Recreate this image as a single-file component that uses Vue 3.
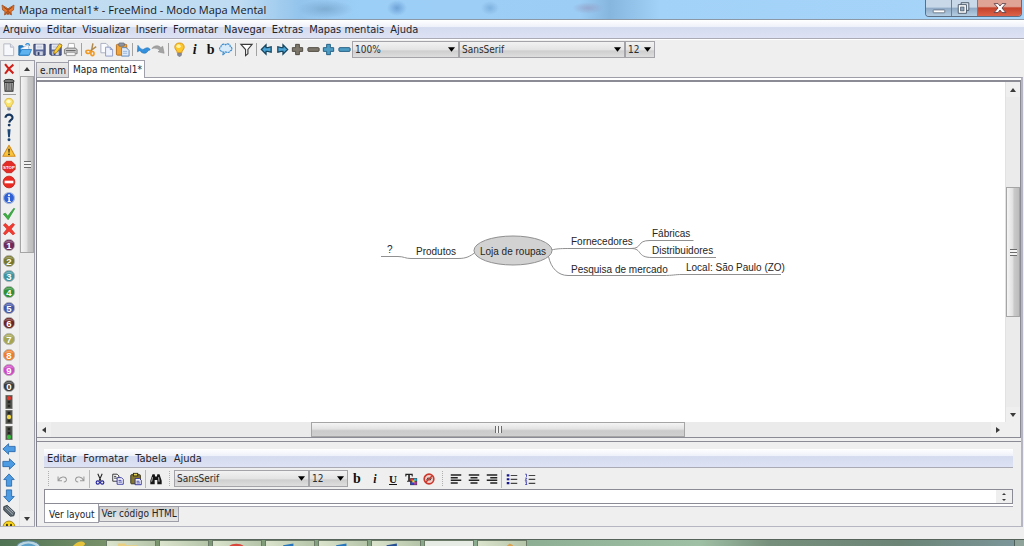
<script setup>
import { ref } from 'vue'

const menus = ['Arquivo', 'Editar', 'Visualizar', 'Inserir', 'Formatar', 'Navegar', 'Extras', 'Mapas mentais', 'Ajuda']
const noteMenus = ['Editar', 'Formatar', 'Tabela', 'Ajuda']

const tools = [
  { id: 'new', label: 'Novo' },
  { id: 'open', label: 'Abrir' },
  { id: 'save', label: 'Salvar' },
  { id: 'saveas', label: 'Salvar como' },
  { id: 'print', label: 'Imprimir' },
  { id: 'sep' },
  { id: 'cut', label: 'Recortar' },
  { id: 'copy', label: 'Copiar' },
  { id: 'paste', label: 'Colar' },
  { id: 'sep' },
  { id: 'undo', label: 'Desfazer' },
  { id: 'redo', label: 'Refazer' },
  { id: 'sep' },
  { id: 'bulb', label: 'Novo nó' },
  { id: 'italic', label: 'Itálico' },
  { id: 'bold', label: 'Negrito' },
  { id: 'cloud', label: 'Nuvem' },
  { id: 'sep' },
  { id: 'filter', label: 'Filtro' },
  { id: 'sep' },
  { id: 'back', label: 'Anterior' },
  { id: 'forward', label: 'Próximo' },
  { id: 'plus', label: 'Expandir', color: '#7d766b', edge: '#4c473f' },
  { id: 'minus', label: 'Recolher', color: '#7d766b', edge: '#4c473f' },
  { id: 'plus', label: 'Expandir tudo', color: '#4d9cc4', edge: '#205d82' },
  { id: 'minus', label: 'Recolher tudo', color: '#4d9cc4', edge: '#205d82' },
]

const marks = [
  { id: 'bulb', label: 'Ideia' },
  { id: 'help', label: 'Pergunta' },
  { id: 'bang', label: 'Importante' },
  { id: 'warn', label: 'Aviso' },
  { id: 'stop', label: 'Pare' },
  { id: 'noentry', label: 'Proibido' },
  { id: 'info', label: 'Informação' },
  { id: 'check', label: 'Certo' },
  { id: 'cross', label: 'Errado' },
  { id: 'num', n: '1', color: '#6d2a5c', label: 'Prioridade 1' },
  { id: 'num', n: '2', color: '#78782c', label: 'Prioridade 2' },
  { id: 'num', n: '3', color: '#3e93a0', label: 'Prioridade 3' },
  { id: 'num', n: '4', color: '#2f8f35', label: 'Prioridade 4' },
  { id: 'num', n: '5', color: '#4456a8', label: 'Prioridade 5' },
  { id: 'num', n: '6', color: '#6e2323', label: 'Prioridade 6' },
  { id: 'num', n: '7', color: '#a5a552', label: 'Prioridade 7' },
  { id: 'num', n: '8', color: '#ee7d2b', label: 'Prioridade 8' },
  { id: 'num', n: '9', color: '#cf48c6', label: 'Prioridade 9' },
  { id: 'num', n: '0', color: '#3b3b3b', label: 'Prioridade 0' },
  { id: 'light', lit: 0, label: 'Sinal vermelho' },
  { id: 'light', lit: 1, label: 'Sinal amarelo' },
  { id: 'light', lit: 2, label: 'Sinal verde' },
  { id: 'arrow', turn: 0, label: 'Esquerda' },
  { id: 'arrow', turn: 180, label: 'Direita' },
  { id: 'arrow', turn: 90, label: 'Acima' },
  { id: 'arrow', turn: 270, label: 'Abaixo' },
  { id: 'clip', label: 'Anexo' },
  { id: 'smile', label: 'Feliz' },
]
const lamps = ['#e03a2e', '#f0d84a', '#35b83a']

const zoom = ref('100%')
const font = ref('SansSerif')
const size = ref('12')
const noteFont = ref('SansSerif')
const noteSize = ref('12')
const note = ref('')
</script>

<template>
  <div class="window">
    <header class="titlebar">
      <svg class="logo" viewBox="0 0 14 14" aria-hidden="true">
        <path d="M1 2 L6 5 L7 7 L8 5 L13 2 L12.5 7 L10 8.5 L10.5 12 L7.5 10.5 L7 12 L6.3 10.5 L3.5 12 L4 8.5 L1.6 7Z" fill="#e8762c" stroke="#9a4a1c" stroke-width=".7" />
        <path d="M2.5 4 L6 6.5 M11.5 4 L8 6.5 M7 5 V11 M4.5 10.5 L6 8.5 M9.5 10.5 L8 8.5" stroke="#74300f" stroke-width=".7" fill="none" />
      </svg>
      <h1>Mapa mental1* - FreeMind - Modo Mapa Mental</h1>
      <div class="controls">
        <button class="ctl" aria-label="Minimizar">
          <svg viewBox="0 0 26 16"><rect x="7.5" y="10" width="12" height="3" rx=".5" fill="#fff" stroke="#586577" stroke-width=".8" /></svg>
        </button>
        <button class="ctl" aria-label="Restaurar">
          <svg viewBox="0 0 26 16">
            <path d="M9.5 2.5H17.500V10.500H9.500Z" fill="#dfe8f2" stroke="#4c5969" />
            <path d="M6.500 4.500H15V13.500H6.500Z" fill="#fff" stroke="#4c5969" />
            <rect x="9" y="7" width="3.500" height="4" fill="#90a7c0" stroke="#4c5969" stroke-width=".8" />
          </svg>
        </button>
        <button class="ctl close" aria-label="Fechar">
          <svg viewBox="0 0 44 16"><path d="M16.500 3.500h4l2 2.500 2-2.500h4l-4 4.500 4 4.700h-4l-2-2.600-2 2.600h-4l4-4.700z" fill="#fff" stroke="#5a3c44" stroke-width=".9" /></svg>
        </button>
      </div>
    </header>

    <nav class="menubar" aria-label="Menu principal">
      <button v-for="m in menus" :key="m">{{ m }}</button>
    </nav>

    <div class="toolbar">
      <div class="strip">
        <template v-for="(t, i) in tools" :key="i">
          <span v-if="t.id === 'sep'" class="sep"></span>
          <button v-else class="tool" :aria-label="t.label">
            <svg viewBox="0 0 16 16">
              <g v-if="t.id === 'new'">
                <path d="M3 2H10L13.500 5.500V14.500H3Z" fill="#f7f8fb" stroke="#b4b8c4" />
                <path d="M10 2V5.500H13.500" fill="#dfe3ec" stroke="#b4b8c4" />
              </g>
              <g v-else-if="t.id === 'open'">
                <path d="M2 14V4H6L7 5.500H12V14Z" fill="#1f7fcb" stroke="#1766a8" />
                <path d="M4 7L12 3L13 9H5Z" fill="#f3f7fb" stroke="#9db4c8" stroke-width=".6" />
                <path d="M2 14L5 8H15.500L13 14Z" fill="#5fb4f0" stroke="#1c74bd" stroke-width=".8" />
                <path d="M9 3C11 1 13 1.500 13.500 4" fill="none" stroke="#2d8ede" stroke-width="1.300" />
              </g>
              <g v-else-if="t.id === 'save' || t.id === 'saveas'">
                <path d="M2 2.500H14V14H3L2 13Z" fill="#5c6b9b" stroke="#2f3b66" />
                <rect x="4" y="2.500" width="8" height="5.500" fill="#eef1f8" />
                <path d="M5 4.500H11M5 6.200H11" stroke="#a9b3cd" stroke-width=".7" />
                <rect x="4.500" y="10" width="7" height="4" fill="#cfd5e4" />
                <rect x="6" y="10.800" width="2" height="3" fill="#2f3b66" />
                <path v-if="t.id === 'saveas'" d="M12.500 1.500L15 4L9 11.500L6 12.500L6.800 9.500Z" fill="#fbcf2c" stroke="#a5761a" stroke-width=".8" />
              </g>
              <g v-else-if="t.id === 'print'">
                <path d="M5 7L6 1.500H12L12.500 7Z" fill="#fff" stroke="#999" stroke-width=".8" />
                <path d="M1.500 8L4 6.500H13L15 8V12.500H1.500Z" fill="#cfcfcf" stroke="#777" />
                <path d="M3.500 11H13V14.500H3.500Z" fill="#f2f2f2" stroke="#888" stroke-width=".8" />
                <path d="M3 9.200H13.500" stroke="#555" />
              </g>
              <g v-else-if="t.id === 'cut'">
                <path d="M9.500 1.500L8 9.500M13 5L6 10" stroke="#b08a50" stroke-width="1.600" />
                <ellipse cx="4.500" cy="10.500" rx="2.500" ry="1.700" fill="none" stroke="#ef9a24" stroke-width="1.700" />
                <ellipse cx="9" cy="12.300" rx="1.700" ry="2.200" fill="none" stroke="#ef9a24" stroke-width="1.700" />
              </g>
              <g v-else-if="t.id === 'copy'">
                <path d="M2 1.500H7.500L9.500 3.500V11.500H2Z" fill="#fafbfd" stroke="#a9aec0" />
                <path d="M7 5.500H12L14.500 8V15H7Z" fill="#eef2fb" stroke="#8f9cc4" />
                <path d="M12 5.500V8H14.500" fill="none" stroke="#8f9cc4" />
              </g>
              <g v-else-if="t.id === 'paste'">
                <rect x="1.500" y="2.500" width="11" height="11.500" rx="1" fill="#f0a43c" stroke="#b26d1c" />
                <rect x="4" y="1" width="6" height="3.500" rx="1" fill="#8d94a3" stroke="#5c6270" stroke-width=".7" />
                <path d="M7 6H12L15 9V15H7Z" fill="#dfeaf8" stroke="#5b86bb" />
                <path d="M8.500 10H13M8.500 12H13" stroke="#86a8d2" stroke-width=".8" />
              </g>
              <path v-else-if="t.id === 'undo'" d="M2 3.500L4 6C5.500 8 8 8.500 9.500 7C12 5.200 15 6.500 15 8.500C12.500 8.200 12.500 12 9 12C6.500 12 5 10.500 4.200 9L1.500 10.500Z" fill="#3290dc" stroke="#1d6fb7" stroke-width=".6" />
              <path v-else-if="t.id === 'redo'" d="M1 7C3 3.500 8 3 10.500 6L12.500 4.500L14 12L7.500 10.500L9.500 9C7 6.500 4 6 1 7Z" fill="#a3a3a3" stroke="#8a8a8a" stroke-width=".6" />
              <g v-else-if="t.id === 'bulb'">
                <path d="M8 1C4.500 1 2.800 3.300 3 5.800C3.200 8 5.500 9 5.500 11.500H10.500C10.500 9 12.800 8 13 5.800C13.200 3.300 11.500 1 8 1Z" fill="#fdc629" stroke="#d88f12" stroke-width=".9" />
                <ellipse cx="7" cy="4.500" rx="2.300" ry="2" fill="#fff3a8" />
                <path d="M6 12H10V14L8.800 15.300H7.200L6 14Z" fill="#8a8d99" stroke="#5e616c" stroke-width=".6" />
              </g>
              <text v-else-if="t.id === 'italic'" x="6" y="13" class="glyph it">i</text>
              <text v-else-if="t.id === 'bold'" x="4" y="13" class="glyph bd">b</text>
              <g v-else-if="t.id === 'cloud'">
                <path d="M4 10C1 9 1 6 3.200 5C3 2.500 6.500 1.500 8 3C10 1 13.500 2.500 13 4.800C15.500 5.500 15.500 9 13 9.500C12 11.500 10 11.500 8.500 10.500L5 14L6 10.800C5 11 4.500 10.500 4 10Z" fill="#d7ebfa" stroke="#3d8ccb" stroke-width="1.200" stroke-dasharray="2.500 .5" />
              </g>
              <path v-else-if="t.id === 'filter'" d="M2 2.500H14L9.500 8V12.500L7 14.500V8Z" fill="#fff" stroke="#3b3b3b" stroke-width="1.200" />
              <path v-else-if="t.id === 'back' || t.id === 'forward'" :class="{ flip: t.id === 'forward' }" d="M2.500 8L7.500 3V6H9.500L13 5V11L9.500 10H7.500V13Z" fill="#4aa4d6" stroke="#15455f" stroke-width="1.300" />
              <path v-else-if="t.id === 'plus'" d="M6 2.500H10V6H13.500V10H10V13.500H6V10H2.500V6H6Z" :fill="t.color" :stroke="t.edge" />
              <rect v-else x="2" y="6" width="12" height="4" rx="1" :fill="t.color" :stroke="t.edge" />
            </svg>
          </button>
        </template>
      </div>
      <label class="combo zoom">
        <select v-model="zoom" aria-label="Zoom"><option>100%</option></select>
        <svg viewBox="0 0 8 5"><path d="M0 0H8L4 5Z" /></svg>
      </label>
      <label class="combo font">
        <select v-model="font" aria-label="Fonte"><option>SansSerif</option></select>
        <svg viewBox="0 0 8 5"><path d="M0 0H8L4 5Z" /></svg>
      </label>
      <label class="combo size">
        <select v-model="size" aria-label="Tamanho"><option>12</option></select>
        <svg viewBox="0 0 8 5"><path d="M0 0H8L4 5Z" /></svg>
      </label>
    </div>

    <div class="body">
      <aside class="side">
        <div class="palette">
          <button class="mark" aria-label="Remover último ícone">
            <svg viewBox="0 0 16 16"><path d="M3.500 2.500C6 6 9.500 10 13 13M13 3C9 6 6 9.500 3.500 13.500" stroke="#d01f18" stroke-width="2.300" fill="none" /></svg>
          </button>
          <button class="mark" aria-label="Remover todos os ícones">
            <svg viewBox="0 0 16 16">
              <path d="M3 5H13L12.500 15H3.500Z" fill="#bdbdbd" stroke="#333" stroke-width="1.200" />
              <path d="M5.500 6V14M8 6V14M10.500 6V14" stroke="#4a4a4a" stroke-width="1.200" />
              <ellipse cx="8" cy="3.500" rx="6" ry="2" fill="#777" stroke="#2b2b2b" />
            </svg>
          </button>
          <hr />
          <div class="marks">
            <button v-for="(m, i) in marks" :key="i" class="mark" :aria-label="m.label">
              <svg viewBox="0 0 16 16">
                <g v-if="m.id === 'bulb'">
                  <path d="M8 1.500C4.500 1.500 3 4 3.200 6C3.500 8.500 5.700 9 5.700 11.500H10.300C10.300 9 12.500 8.500 12.800 6C13 4 11.500 1.500 8 1.500Z" fill="#fbe46c" stroke="#d9b542" />
                  <ellipse cx="7.500" cy="5" rx="2.500" ry="2" fill="#fffad0" />
                  <path d="M6 12H10V14L9 15.500H7L6 14Z" fill="#8e909b" />
                </g>
                <g v-else-if="m.id === 'help'" fill="none" stroke="#17365f">
                  <path d="M4 5.500C4 0.500 12.500 1 12 5.500C11.700 8 8.500 8 8.300 11" stroke-width="2.500" />
                  <circle cx="8.200" cy="13.800" r=".9" stroke-width="1.500" />
                </g>
                <g v-else-if="m.id === 'bang'" fill="#1c4677">
                  <path d="M6.200 1.500H9.800L9 10.500H7Z" /><circle cx="8" cy="13.300" r="1.700" />
                </g>
                <g v-else-if="m.id === 'warn'">
                  <path d="M8 1.500L15 14H1Z" fill="#f9c43b" stroke="#d58c1d" stroke-width="1.200" stroke-linejoin="round" />
                  <path d="M7.200 5.500H8.800L8.500 10H7.500Z" fill="#222" /><circle cx="8" cy="11.800" r="1" fill="#222" />
                </g>
                <g v-else-if="m.id === 'stop'">
                  <path d="M5 1.500H11L15 5.500V10.500L11 14.500H5L1 10.500V5.500Z" fill="#e52b25" stroke="#c22520" />
                  <text x="8" y="10" class="tiny">STOP</text>
                </g>
                <g v-else-if="m.id === 'noentry'">
                  <circle cx="8" cy="8" r="6.700" fill="#ea2a22" stroke="#c5231c" /><rect x="3" y="6.500" width="10" height="3" fill="#fff" />
                </g>
                <g v-else-if="m.id === 'info'">
                  <circle cx="8" cy="8" r="6.300" fill="#2f60d6" stroke="#a9b9d9" stroke-width="1.400" />
                  <circle cx="8" cy="4.800" r="1.200" fill="#fff" /><path d="M6.500 7H9V11.500H10V12.500H6.500V11.500H7.300V8H6.500Z" fill="#fff" />
                </g>
                <path v-else-if="m.id === 'check'" d="M1.500 8L4 7L6.500 10.500L13.500 1.500L14.500 2L7 14.500Z" fill="#3eb043" stroke="#2b9033" stroke-width=".8" />
                <path v-else-if="m.id === 'cross'" d="M1.500 3.500L4 1.500L8 5.500L12.500 1.500L14.500 3L10.500 8L14.800 13L12.500 14.800L8 10.500L3.500 14.800L1.500 13L5.500 8Z" fill="#f13a30" stroke="#cc231b" stroke-width=".6" />
                <g v-else-if="m.id === 'num'">
                  <circle cx="8" cy="8" r="6.500" :fill="m.color" stroke="#b7b7b7" stroke-width="1" />
                  <path d="M3 6A5.500 5.500 0 0 1 13 6C10 4.500 6 4.500 3 6Z" fill="#fff" opacity=".3" />
                  <text x="8" y="12" class="digit">{{ m.n }}</text>
                </g>
                <g v-else-if="m.id === 'light'">
                  <rect x="4.500" y=".500" width="7" height="15" fill="#4a4a46" stroke="#6d6d68" />
                  <circle v-for="k in 3" :key="k" cx="8" :cy="k * 4.500 - 1" :r="m.lit === k - 1 ? 2.500 : 1.500" :fill="m.lit === k - 1 ? lamps[k - 1] : '#252522'" />
                </g>
                <path v-else-if="m.id === 'arrow'" :transform="`rotate(${m.turn} 8 8)`" d="M1 8L7.500 2V5H15V11H7.500V14Z" fill="#4d9be2" stroke="#2b69ad" stroke-width="1" />
                <g v-else-if="m.id === 'clip'">
                  <path d="M2 3L6 1.500L14.500 9.500L13.500 13.500L9.500 14L2 7Z" fill="#5a6670" stroke="#323b43" />
                  <path d="M4 4L12.500 12M6.500 3.500L13 9.500" stroke="#bfc7cd" stroke-width=".9" />
                </g>
                <g v-else>
                  <circle cx="8" cy="8" r="6.800" fill="#f9d51d" stroke="#9b7e12" />
                  <ellipse cx="5.700" cy="6" rx="1" ry="1.600" fill="#222" /><ellipse cx="10.300" cy="6" rx="1" ry="1.600" fill="#222" />
                  <path d="M4 9.500Q8 14 12 9.500" fill="none" stroke="#222" />
                </g>
              </svg>
            </button>
          </div>
        </div>
        <div class="vscroll">
          <button aria-label="Rolar para cima"><svg viewBox="0 0 6 4"><path d="M0 4H6L3 0Z" /></svg></button>
          <div class="track"><span class="lead"></span><span class="thumb"><i></i></span><span class="rest"></span></div>
          <button aria-label="Rolar para baixo"><svg viewBox="0 0 6 4"><path d="M0 0H6L3 4Z" /></svg></button>
        </div>
      </aside>

      <main class="main">
        <div class="tabs">
          <button class="tab">e.mm</button>
          <button class="tab active">Mapa mental1*</button>
        </div>
        <div class="page">
          <section class="view">
            <div class="canvas">
              <svg class="map" viewBox="0 0 430 70" role="img" aria-label="Loja de roupas">
                <g fill="none" stroke="#909090">
                  <path d="M11 37.500H28C34 37.500 35 39.500 41 39.500H88C97 39.500 100 37 104.500 34" />
                  <path d="M181 31C188 29.500 192 29.500 201 29.500H261C273 29.500 266 21.500 280 21.500H323.500" />
                  <path d="M261 29.500C273 29.500 266 38.500 282 38.500H346" />
                  <path d="M178.500 37.500C181 49 188 56.500 198 56.500H293C304 56.500 304 55.500 312 55.500H411" />
                </g>
                <ellipse cx="143" cy="31.500" rx="39" ry="14.500" fill="#d2d2d2" stroke="#909090" />
                <g class="node">
                  <text x="17" y="34">?</text>
                  <text x="46" y="36">Produtos</text>
                  <text x="143" y="36" text-anchor="middle">Loja de roupas</text>
                  <text x="201" y="26">Fornecedores</text>
                  <text x="282" y="18">Fábricas</text>
                  <text x="282" y="35">Distribuidores</text>
                  <text x="201" y="54">Pesquisa de mercado</text>
                  <text x="316" y="52">Local: São Paulo (ZO)</text>
                </g>
              </svg>
            </div>
            <div class="vscroll">
              <button aria-label="Rolar mapa para cima"><svg viewBox="0 0 6 4"><path d="M0 4H6L3 0Z" /></svg></button>
              <div class="track"><span class="lead"></span><span class="thumb"><i></i></span><span class="rest"></span></div>
              <button aria-label="Rolar mapa para baixo"><svg viewBox="0 0 6 4"><path d="M0 0H6L3 4Z" /></svg></button>
            </div>
            <div class="hscroll">
              <button aria-label="Rolar mapa para a esquerda"><svg viewBox="0 0 4 6"><path d="M4 0V6L0 3Z" /></svg></button>
              <div class="track"><span class="lead"></span><span class="thumb"><i></i></span><span class="rest"></span></div>
              <button aria-label="Rolar mapa para a direita"><svg viewBox="0 0 4 6"><path d="M0 0V6L4 3Z" /></svg></button>
            </div>
            <div class="corner"></div>
          </section>

          <section class="notes">
            <nav class="menubar" aria-label="Menu da nota">
              <button v-for="m in noteMenus" :key="m">{{ m }}</button>
            </nav>
            <div class="notebar">
              <span class="grip"></span>
              <button class="nb" aria-label="Desfazer"><svg viewBox="0 0 16 16"><path d="M3.500 5V10H8M4 9.500C6 5 12 4.500 13 8C13.500 10 12 11.500 10 11.500" fill="none" stroke="#9a9a9a" stroke-width="1.200" /></svg></button>
              <button class="nb" aria-label="Refazer"><svg viewBox="0 0 16 16"><path d="M12.500 5V10H8M12 9.500C10 5 4 4.500 3 8C2.500 10 4 11.500 6 11.500" fill="none" stroke="#9a9a9a" stroke-width="1.200" /></svg></button>
              <span class="bar"></span>
              <button class="nb" aria-label="Recortar"><svg viewBox="0 0 16 16"><path d="M5.500 2L9 10M10.500 2L7 10" stroke="#222" stroke-width="1.200" /><circle cx="5.500" cy="12" r="1.900" fill="none" stroke="#24249a" stroke-width="1.300" /><circle cx="10.500" cy="12" r="1.900" fill="none" stroke="#24249a" stroke-width="1.300" /></svg></button>
              <button class="nb" aria-label="Copiar"><svg viewBox="0 0 16 16"><path d="M2 2.500H7L9 4.500V10.500H2Z" fill="#fff" stroke="#222" /><path d="M3.500 5H6M3.500 7H7" stroke="#222" /><path d="M7 6.500H12L14 8.500V14H7Z" fill="#fff" stroke="#24249a" /><path d="M8.500 9.500H12M8.500 11.500H12.500" stroke="#24249a" /></svg></button>
              <button class="nb" aria-label="Colar"><svg viewBox="0 0 16 16"><rect x="2" y="3" width="11" height="10.500" rx="1" fill="#84762e" stroke="#2d2912" /><rect x="5" y="1.500" width="5" height="3" fill="#e6d557" stroke="#2d2912" /><path d="M7 7.500H12L14 9.500V14.500H7Z" fill="#fff" stroke="#24249a" /><path d="M8.500 10.500H12M8.500 12.500H12.500" stroke="#24249a" /></svg></button>
              <span class="bar"></span>
              <button class="nb" aria-label="Localizar"><svg viewBox="0 0 16 16"><path d="M4 2.500H6.500L7 5H9L9.500 2.500H12L14.500 10V14H9.500V9H6.500V14H1.500V10Z" fill="#161616" /><path d="M4 6L3 11M11 6L11.500 11" stroke="#ddd" /></svg></button>
              <span class="grip"></span>
              <label class="combo nfont">
                <select v-model="noteFont" aria-label="Fonte da nota"><option>SansSerif</option></select>
                <svg viewBox="0 0 8 5"><path d="M0 0H8L4 5Z" /></svg>
              </label>
              <label class="combo nsize">
                <select v-model="noteSize" aria-label="Tamanho da nota"><option>12</option></select>
                <svg viewBox="0 0 8 5"><path d="M0 0H8L4 5Z" /></svg>
              </label>
              <button class="nb letter"><b>b</b></button>
              <button class="nb letter slim"><b><i>i</i></b></button>
              <button class="nb letter under"><b><u>U</u></b></button>
              <button class="nb" aria-label="Cor do texto"><svg viewBox="0 0 16 16"><path d="M1.500 2H10V5H9L8.500 3.500H6.700V10H8V11H3.500V10H4.800V3.500H3L2.500 5H1.500Z" fill="#222" /><rect x="7" y="7" width="8" height="8" fill="#333" /><rect x="7.500" y="7.500" width="3" height="3" fill="#e53a2f" /><rect x="11" y="7.500" width="3.500" height="3" fill="#2bb4d8" /><rect x="7.500" y="11" width="3" height="3.500" fill="#2f45d6" /><rect x="11" y="11" width="3.500" height="3.500" fill="#a73ca8" /><rect x="9.500" y="9.500" width="2.500" height="2.500" fill="#f3d735" /></svg></button>
              <button class="nb" aria-label="Remover formatação"><svg viewBox="0 0 16 16"><circle cx="8" cy="8" r="5.500" fill="#f1d0cb" stroke="#cb382d" stroke-width="1.900" /><path d="M5 9.500L7 6.500V9.500M9 6.500L9 9.500L11 6.500" stroke="#333" fill="none" /><path d="M4 12L12 4" stroke="#cb382d" stroke-width="1.600" /></svg></button>
              <span class="grip"></span>
              <button class="nb" aria-label="Alinhar à esquerda"><svg viewBox="0 0 16 16"><path d="M2 3.500H14M2 6.500H10M2 9.500H14M2 12.500H10" stroke="#222" stroke-width="1.600" /></svg></button>
              <button class="nb" aria-label="Centralizar"><svg viewBox="0 0 16 16"><path d="M2 3.500H14M4 6.500H12M2 9.500H14M4 12.500H12" stroke="#222" stroke-width="1.600" /></svg></button>
              <button class="nb" aria-label="Alinhar à direita"><svg viewBox="0 0 16 16"><path d="M2 3.500H14M6 6.500H14M2 9.500H14M6 12.500H14" stroke="#222" stroke-width="1.600" /></svg></button>
              <span class="bar"></span>
              <button class="nb" aria-label="Lista"><svg viewBox="0 0 16 16"><path d="M2 2.500H5V5H2ZM2 7H5V9.500H2ZM2 11.500H5V14H2Z" fill="#16168c" /><path d="M6.500 4H14M6.500 8.500H14M6.500 13H14" stroke="#444" stroke-width="1.300" /></svg></button>
              <button class="nb" aria-label="Lista numerada"><svg viewBox="0 0 16 16"><path d="M2.500 2.500H4V5.500M2.500 7H4.500L2.500 9.500H4.500M2.500 11.200H4.500L3.500 12.500L4.500 14.300H2.500" fill="none" stroke="#3b3bb0" /><path d="M6.500 4H14M6.500 8.500H14M6.500 13H14" stroke="#444" stroke-width="1.300" /></svg></button>
            </div>
            <div class="entry">
              <input v-model="note" aria-label="Nota" />
              <span class="spin">
                <svg viewBox="0 0 4 8"><path d="M0 2H4L2 0ZM0 6H4L2 8Z" /></svg>
              </span>
            </div>
            <div class="foot">
              <button class="ftab on">Ver layout</button>
              <button class="ftab">Ver código HTML</button>
            </div>
          </section>
        </div>
      </main>
    </div>

    <footer class="taskbar">
      <svg class="orb" viewBox="0 0 106 7" aria-hidden="true">
        <ellipse cx="26" cy="9" rx="14" ry="8" fill="#b9d3df" stroke="#4d7f99" />
        <ellipse cx="26" cy="10" rx="10" ry="6" fill="#5ba0c8" />
        <path d="M78 7C83 1 89 1 91 3C93 4 92 6 90 7" fill="#e5c23c" />
      </svg>
      <span class="task"><svg viewBox="0 0 50 7"><path d="M10 7V3H18L20 5H32V7Z" fill="#e9cf7e" /></svg></span>
      <span class="task"></span>
      <span class="task"><svg viewBox="0 0 50 7"><path d="M15 7C18 2 30 2 34 7Z" fill="#d9463b" /></svg></span>
      <span class="task"><svg viewBox="0 0 50 7"><path d="M17 7V5L29 3V7Z" fill="#2676bd" /></svg></span>
      <span class="task"><svg viewBox="0 0 50 7"><path d="M17 7V5L29 3V7Z" fill="#2676bd" /></svg></span>
      <span class="task"><svg viewBox="0 0 50 7"><path d="M14 7V5L26 3V7Z" fill="#254f92" /></svg></span>
      <span class="task bright"></span>
      <span class="task"><svg viewBox="0 0 50 7"><path d="M29 7L34 3L38 5L36 7Z" fill="#dba04d" /></svg></span>
      <span class="desk"></span>
    </footer>
  </div>
</template>

<style>
html,
body {
  margin: 0;
  background: #efefef;
}
</style>

<style scoped>
.window {
  display: flex;
  flex-direction: column;
  height: 100vh;
  min-height: 500px;
  overflow: hidden;
  background: #efefef;
  color: #22242c;
  font-family: "DejaVu Sans Condensed", "Open Sans", "Noto Sans", sans-serif;
  font-size: 11px;
}
.window *,
.window *::before {
  box-sizing: border-box;
}
button {
  margin: 0;
  padding: 0;
  border: 0;
  background: none;
  color: inherit;
  font: inherit;
}
svg {
  display: block;
}

.titlebar {
  flex: none;
  display: flex;
  align-items: center;
  height: 20px;
  padding: 0 2px 0 1px;
  border-bottom: 1px solid #8c98a6;
  background:
    radial-gradient(ellipse 10px 8px at 397px 8px, #6fa3d8 0, transparent 100%),
    radial-gradient(ellipse 9px 7px at 490px 8px, #80b2e0 0, transparent 100%),
    radial-gradient(ellipse 16px 6px at 588px 8px, #95a9d0 0, transparent 100%),
    radial-gradient(ellipse 28px 9px at 325px 9px, #7fadd4 0, transparent 100%),
    linear-gradient(90deg, #c3dcf0 0, #bfdcf3 240px, #93c4ec 300px, #9ccff7 360px, #9ccdf5 580px, #86b6de 610px, #a3d2f8 660px, #a6d4f9 100%);
}
.logo {
  width: 14px;
  height: 14px;
}
h1 {
  flex: 1;
  margin: 0 0 0 4px;
  font-family: "Open Sans", "Noto Sans", sans-serif;
  font-size: 11px;
  font-weight: 400;
  line-height: 18px;
  color: #15181d;
}
.controls {
  display: flex;
  align-self: flex-start;
  height: 17px;
  border: 1px solid #5d6d82;
  border-top: 0;
  border-radius: 0 0 4px 4px;
  overflow: hidden;
}
.ctl {
  width: 26px;
  height: 16px;
  border-right: 1px solid #6d7f96;
  background: linear-gradient(#c9d8e8 0 45%, #8fa9c5 50%, #b4cde2);
}
.ctl svg {
  width: 100%;
  height: 16px;
}
.ctl.close {
  width: 43px;
  border-right: 0;
  background: linear-gradient(#e0a496 0 40%, #c4432c 50%, #dc6248);
}

.menubar {
  flex: none;
  display: flex;
  gap: 6px;
  height: 19px;
  padding-left: 3px;
  border-bottom: 1px solid #a9aab3;
  background: linear-gradient(#fff 0, #eef1fa 38%, #d5dbef 42%, #dde3f4);
}
.menubar button {
  line-height: 20px;
}
.notes .menubar {
  gap: 7px;
}

.toolbar {
  flex: none;
  display: flex;
  align-items: flex-start;
  height: 21px;
  padding-top: 1px;
  border-top: 1px solid #fff;
}
.strip {
  display: flex;
  align-items: center;
  width: 351px;
  margin-left: 1px;
}
.tool {
  flex: 1;
  height: 17px;
}
.tool svg {
  width: 15px;
  height: 15px;
  margin: 0 auto;
}
.sep {
  width: 1px;
  height: 13px;
  margin: 0 2px;
  background: #a2a2a2;
}
.flip {
  transform: rotate(180deg);
  transform-origin: 8px 8px;
}
.glyph {
  font-family: "Liberation Serif", serif;
  font-size: 15px;
  font-weight: 700;
  fill: #111;
}
.it {
  font-style: italic;
}
.combo {
  position: relative;
  display: block;
  height: 17px;
}
.combo select {
  display: block;
  width: 100%;
  height: 17px;
  padding: 0 2px;
  border: 1px solid #a3a3a8;
  border-radius: 0;
  appearance: none;
  background: linear-gradient(#f2f2f2, #e4e4e4 50%, #cfcfcf 60%, #dedede);
  color: #2d2d2d;
  font-family: "DejaVu Sans Condensed", "Open Sans", sans-serif;
  font-size: 10px;
}
.combo svg {
  position: absolute;
  right: 4px;
  top: 6px;
  width: 7px;
  height: 5px;
  pointer-events: none;
}
.combo.zoom {
  width: 107px;
}
.combo.font {
  width: 166px;
}
.combo.size {
  width: 30px;
}

.body {
  flex: 1;
  display: flex;
  min-height: 0;
  margin-bottom: 12px;
}
.side {
  flex: none;
  display: flex;
  width: 35px;
  border: 1px solid #9d9ea8;
  border-bottom-color: #b5b6c2;
  overflow: hidden;
}
.palette {
  display: flex;
  flex-direction: column;
  width: 18px;
  min-height: 0;
}
.palette hr {
  flex: none;
  width: 13px;
  height: 1px;
  margin: 1px 2px;
  border: 0;
  background: #9c9c9c;
}
.mark {
  display: block;
  flex: none;
  width: 16px;
  height: 16px;
}
.mark svg {
  width: 14px;
  height: 14px;
  margin: 0 auto;
}
.marks {
  flex: 1;
  display: flex;
  flex-direction: column;
  min-height: 0;
  margin-bottom: -9px;
}
.marks .mark {
  flex: 1;
  min-height: 0;
}
.tiny {
  font-family: "Liberation Sans", sans-serif;
  font-size: 5px;
  font-weight: 700;
  text-anchor: middle;
  fill: #fff;
}
.digit {
  font-family: "Liberation Sans", sans-serif;
  font-size: 11px;
  font-weight: 700;
  text-anchor: middle;
  fill: #fff;
}

.vscroll,
.hscroll {
  display: flex;
  background: #ebebeb;
}
.vscroll {
  flex-direction: column;
  width: 15px;
  border-left: 1px solid #e2e2e2;
}
.vscroll button,
.hscroll button {
  flex: none;
  display: grid;
  place-items: center;
  width: 14px;
  height: 15px;
  background: #efefef;
}
.vscroll button svg {
  width: 6px;
  height: 4px;
}
.hscroll button svg {
  width: 4px;
  height: 6px;
}
.vscroll button svg,
.hscroll button svg,
.spin svg {
  fill: #3a3a3a;
}
.track {
  flex: 1;
  display: flex;
  min-width: 0;
  min-height: 0;
}
.vscroll .track {
  flex-direction: column;
}
.thumb {
  display: grid;
  place-items: center;
  border: 1px solid #a5a5a5;
}
.vscroll .thumb {
  background: linear-gradient(90deg, #f4f4f4, #e3e3e3 45%, #c9c9c9 60%, #bdbdbd);
}
.hscroll .thumb {
  background: linear-gradient(#f4f4f4, #e3e3e3 45%, #cbcbcb 60%, #d0d0d0);
}
.vscroll .thumb i {
  width: 7px;
  height: 7px;
  background: repeating-linear-gradient(#6b6b6b 0 1px, #f2f2f2 1px 3px);
}
.hscroll .thumb i {
  width: 7px;
  height: 7px;
  background: repeating-linear-gradient(90deg, #6b6b6b 0 1px, #f2f2f2 1px 3px);
}
.side .lead {
  flex: 0;
}
.side .thumb {
  flex: 175;
}
.side .rest {
  flex: 259;
}

.main {
  flex: 1;
  display: flex;
  flex-direction: column;
  min-width: 0;
  padding: 0 1px;
}
.tabs {
  flex: none;
  display: flex;
  align-items: flex-end;
  height: 17px;
}
.tab {
  height: 15px;
  padding: 0 2px 0 3px;
  border: 1px solid #9fa0aa;
  border-bottom: 0;
  background: linear-gradient(#e9e9e9, #d9d9d9);
  font-size: 10px;
  line-height: 15px;
}
.tab.active {
  z-index: 1;
  height: 18px;
  margin: 0 0 -1px -1px;
  padding: 0 2px 0 4px;
  background: #fff;
  line-height: 16px;
}
.page {
  flex: 1;
  display: flex;
  flex-direction: column;
  min-height: 0;
  border: 1px solid;
  border-color: #9d9ea8 #b5b6c2 #b5b6c2 #82838c;
  border-right-width: 2px;
  padding-top: 2px;
  background: linear-gradient(#fff 0 2px, #efefef 2px);
}
.view {
  flex: 1;
  display: grid;
  grid-template-columns: 1fr 15px;
  grid-template-rows: 1fr 15px;
  min-height: 0;
  border: 1px solid #8a8b95;
  border-left: 0;
  border-top-width: 2px;
}
.canvas {
  position: relative;
  overflow: hidden;
  background: #fff;
}
.map {
  position: absolute;
  left: 333px;
  top: 137px;
  width: 430px;
  height: 70px;
}
.node {
  font-family: "Liberation Sans", Arial, sans-serif;
  font-size: 10px;
  fill: #252525;
}
.view .vscroll .lead {
  flex: 91;
}
.view .vscroll .thumb {
  flex: 129;
}
.view .vscroll .rest {
  flex: 91;
}
.hscroll .lead {
  flex: 261;
}
.hscroll .thumb {
  flex: 373;
}
.hscroll .rest {
  flex: 307;
}

.notes {
  flex: none;
  margin-top: 3px;
  padding: 7px 8px 3px 7px;
  border-top: 1px solid #8a8b95;
}
.notebar {
  display: flex;
  align-items: center;
  height: 21px;
}
.nb {
  display: grid;
  place-items: center;
  width: 18px;
  height: 18px;
}
.nb svg {
  width: 14px;
  height: 14px;
}
.letter {
  font-family: "Liberation Serif", serif;
  font-size: 14px;
  line-height: 18px;
  color: #111;
}
.slim {
  font-size: 12px;
}
.under {
  font-size: 11px;
}
.bar {
  width: 1px;
  height: 18px;
  margin-right: 1px;
  background: #b9b9b9;
}
.grip {
  width: 1px;
  height: 16px;
  margin: 0 4px;
  background: repeating-linear-gradient(#b0b0b0 0 1px, transparent 1px 2px);
}
.combo.nfont {
  width: 135px;
}
.combo.nsize {
  width: 39px;
}
.entry {
  display: flex;
  height: 15px;
  border: 1px solid #8a8b95;
  background: #fff;
}
.entry input {
  flex: 1;
  min-width: 0;
  padding: 0 3px;
  border: 0;
  outline: 0;
  background: #fff;
  font: inherit;
}
.spin {
  display: grid;
  place-items: center;
  width: 16px;
  background: #efefef;
}
.spin svg {
  width: 4px;
  height: 8px;
}
.foot {
  display: flex;
  align-items: flex-start;
  height: 19px;
  background: linear-gradient(#fff 0 2px, #a4a5b0 2px 3px, transparent 3px);
}
.ftab {
  height: 16px;
  margin-top: 2px;
  padding: 0 1px 0 2px;
  border: 1px solid #9d9ea8;
  background: linear-gradient(#d2d2d2, #e6e6e6);
  font-size: 10px;
  line-height: 14px;
}
.ftab.on {
  height: 19px;
  margin-top: 0;
  padding: 4px 3px 0 4px;
  border-top: 0;
  background: #fff;
}

.taskbar {
  flex: none;
  display: flex;
  gap: 3px;
  height: 7px;
  border-top: 1px solid #56635b;
  background: linear-gradient(90deg, #4f7353 0, #78916a 106px, #8eaf94 530px, #a0c0a5 700px, #768f7c 770px, #6c8577 900px, #7d969b 100%);
}
.orb {
  width: 103px;
  height: 6px;
}
.task {
  width: 50px;
  border: 1px solid #6b7a67;
  border-bottom: 0;
  background: linear-gradient(90deg, #dbe3cd, #b5c5a8);
}
.task svg {
  width: 48px;
  height: 6px;
}
.bright {
  background: #e6ece4;
}
.desk {
  width: 10px;
  margin-left: auto;
  border-left: 1px solid #4e5e58;
  background: #8fa39a;
}
</style>
